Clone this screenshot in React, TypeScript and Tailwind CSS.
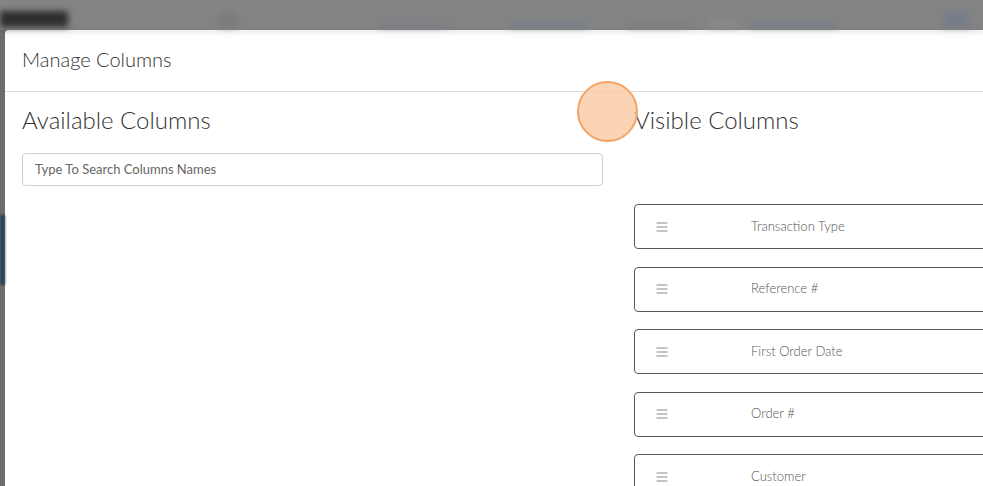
import React from "react";

const rows = ["Transaction Type", "Reference #", "First Order Date", "Order #", "Customer"];

function Grip() {
  return (
    <svg width="12" height="10" viewBox="0 0 12 10" className="shrink-0">
      <path d="M0.5 1h11M0.5 5h11M0.5 9h11" stroke="#8a8a8a" strokeWidth="1.1" />
    </svg>
  );
}

export default function App() {
  return (
    <div
      className="relative w-[983px] h-[486px] overflow-hidden bg-[#848484] flex flex-col"
      style={{ fontFamily: "Lato, 'Open Sans', sans-serif" }}
    >
      {/* dimmed, blurred page header behind the modal */}
      <div className="h-[30px] shrink-0 flex items-end pb-[2px] border-b border-[#6e6e6e] blur-[3px]">
        <div className="w-[68px] h-[16px] bg-[#2e2e2e]" />
        <div className="ml-[150px] w-[20px] h-[14px] bg-[#7a7a7a] rounded-full" />
        <div className="ml-[140px] w-[70px] h-[5px] bg-[#7c8088]" />
        <div className="ml-[60px] w-[80px] h-[5px] bg-[#77808c]" />
        <div className="ml-[40px] w-[60px] h-[5px] bg-[#7b7e82]" />
        <div className="ml-[20px] w-[30px] h-[5px] bg-[#8e8e8e]" />
        <div className="ml-[10px] w-[90px] h-[5px] bg-[#78808a]" />
        <div className="ml-auto mr-[14px] w-[26px] h-[16px] bg-[#767d88]" />
      </div>

      <div className="flex flex-1 min-h-0">
        <div className="w-[5px] shrink-0 bg-[#6c6c6c] flex flex-col pt-[185px]">
          <div className="h-[70px] bg-[#2c4358] blur-[1px]" />
        </div>

        {/* modal */}
        <div className="flex-1 min-w-0 bg-white rounded-tl-[4px] flex flex-col overflow-hidden">
          <div className="h-[62px] shrink-0 px-[17px] flex items-center border-b border-[#dedede]">
            <h4 className="text-[20px] font-light text-[#333] leading-none -mt-[3px]">Manage Columns</h4>
          </div>
          <div className="flex px-[17px] pt-[14px] gap-[31px]">
            <div className="w-[581px] shrink-0 flex flex-col">
              <h3 className="text-[24px] font-light text-[#333] leading-[28px]">Available Columns</h3>
              <div className="mt-[19px] h-[33px] border border-[#cfcfcf] rounded-[4px] flex items-center px-[12px] text-[13px] text-[#666]">
                Type To Search Columns Names
              </div>
            </div>
            <div className="w-[560px] shrink-0 flex flex-col">
              <h3 className="text-[24px] font-light text-[#333] leading-[28px]">Visible Columns</h3>
              <div className="mt-[70px] flex flex-col gap-[17.5px]">
                {rows.map((r) => (
                  <div
                    key={r}
                    className="h-[45px] border border-[#4f5b60] rounded-[4px] flex items-center pl-[21px]"
                  >
                    <Grip />
                    <span className="ml-[83px] text-[13px] font-light text-[#555]">{r}</span>
                  </div>
                ))}
              </div>
            </div>
          </div>
        </div>
      </div>

      {/* click indicator overlay */}
      <div className="absolute left-[577px] top-[81px] w-[61px] h-[61px] rounded-full bg-[#f9c9a1]/80 border-2 border-[#f3a466]" />
    </div>
  );
}
